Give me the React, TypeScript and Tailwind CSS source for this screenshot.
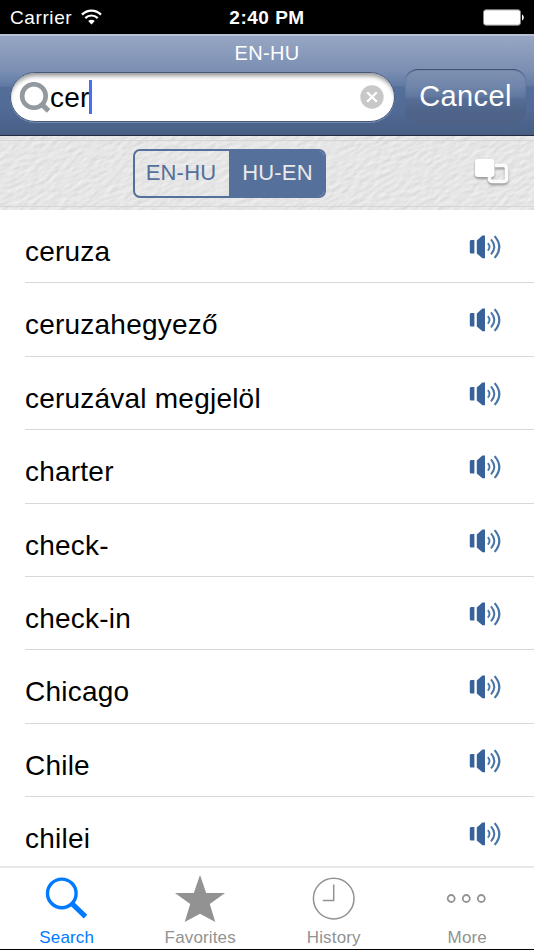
import React, { useState } from 'react';

const words = [
    'ceruza',
    'ceruzahegyező',
    'ceruzával megjelöl',
    'charter',
    'check-',
    'check-in',
    'Chicago',
    'Chile',
    'chilei',
];

function StatusBar(): JSX.Element {
    return (
        <div className="grid h-[34px] shrink-0 grid-cols-3 items-center bg-black px-[10px] pt-[3px] text-[19px] text-white">
            <div className="flex items-center gap-[9px]">
                <span className="tracking-[0.6px]">Carrier</span>
                <svg className="-mt-[3px] h-[16px] w-[21px]" viewBox="0 0 21 16" fill="none" stroke="white">
                    <path d="M1 5.6C6.5.2 14.5.2 20 5.6" strokeWidth="2.3" />
                    <path d="M4.3 9.1c3.6-3.5 8.8-3.5 12.4 0" strokeWidth="2.2" />
                    <path d="M10.5 15.4 7.2 12.1c1.9-1.8 4.7-1.8 6.6 0Z" fill="white" stroke="none" />
                </svg>
            </div>
            <span className="text-center text-[19px] font-bold tracking-[0.5px] whitespace-nowrap">2:40 PM</span>
            <svg className="-mt-[3px] -mr-[1px] h-[17px] w-[42px] justify-self-end" viewBox="0 0 42 17">
                <rect x="0.5" y="0.8" width="37" height="15.4" rx="2.5" fill="white" stroke="#888" />
                <path d="M39 5.5c2.4 1 2.4 5 0 6Z" fill="white" />
            </svg>
        </div>
    );
}

function SearchHeader(): JSX.Element {
    return (
        <header className="flex h-[102px] shrink-0 flex-col border-t-2 border-b border-t-[#b8c1d4] border-b-[#232c40] bg-[linear-gradient(#97a6c3_0%,#7b8fb3_35%,#627aa4_50%,#546e9a_52%,#516a96_75%,#485e84_100%)]">
            <h1 className="h-[33px] pt-[4px] text-center text-[20px] leading-[26px] tracking-[0.3px] text-white">EN-HU</h1>
            <div className="flex pl-[10px]">
                <div className="mt-[3px] flex h-[50px] w-[385px] items-center rounded-full border border-[#45597e] bg-white pr-[10px] pl-[8px] shadow-[inset_0_5px_4px_-2px_#999,0_1px_0_#7389ae]">
                    <svg className="h-[31px] w-[31px] shrink-0" viewBox="0 0 31 31" fill="none" stroke="#92999f">
                        <circle cx="14.9" cy="14" r="11.8" strokeWidth="4.6" />
                        <path d="m22.3 21.8 7.3 7.2" strokeWidth="5.2" />
                    </svg>
                    <span className="pt-[2px] text-[28px] leading-[34px] tracking-[0.2px] text-black">cer</span>
                    <span className="-ml-px h-[34px] w-[3px] bg-[#476ef0]" />
                    <button className="ml-auto" type="button" aria-label="Clear">
                        <svg className="h-[24px] w-[24px]" viewBox="0 0 24 24">
                            <circle cx="12" cy="12" r="11.7" fill="#c8c8c8" />
                            <path d="m7.2 7.2 9.6 9.6m0-9.6-9.6 9.6" stroke="white" strokeWidth="2.3" />
                        </svg>
                    </button>
                </div>
                <button
                    className="ml-[10px] h-[56px] w-[121px] rounded-[13px] bg-[linear-gradient(#7f92b4_0%,#7086aa_30%,#6178a0_49%,#586e95_53%,#4f6489_75%,#4e6287_100%)] pb-px text-[29px] tracking-[0.4px] text-white shadow-[inset_0_2px_1px_-1px_#3e4f6e,inset_0_0_2px_#536994]"
                    type="button">
                    Cancel
                </button>
            </div>
        </header>
    );
}

function LanguageBar(): JSX.Element {
    const [direction, setDirection] = useState('HU-EN');

    return (
        <div className="relative isolate flex h-[74px] shrink-0 items-center bg-[#e4e4e4] pr-[24px] pl-[133px]">
            {/* leather grain */}
            <svg className="absolute inset-0 -z-10 h-full w-full">
                <filter id="grain" x="0" y="0" width="100%" height="100%" colorInterpolationFilters="sRGB">
                    <feTurbulence type="fractalNoise" baseFrequency="0.11 0.24" numOctaves="2" seed="8" />
                    <feDiffuseLighting lightingColor="#fff" surfaceScale="0.24" diffuseConstant="1.04">
                        <feDistantLight azimuth="250" elevation="60" />
                    </feDiffuseLighting>
                </filter>
                <g transform="rotate(-24 267 37)">
                    <rect x="-40" y="-160" width="620" height="400" filter="url(#grain)" />
                </g>
                <path d="M0 4.5h534M0 70.5h534" stroke="#d6d6d6" />
            </svg>
            <div className="flex h-[49px] w-[193px] overflow-hidden rounded-[7px] border-2 border-[#54709b] text-[22px] tracking-[0.2px]">
                <button
                    className={`${direction === 'EN-HU' ? 'bg-[#54709b] text-[#e9e9e9]' : 'text-[#54709b]'} w-[94px] pr-[2px] pb-px`}
                    onClick={() => setDirection('EN-HU')}
                    type="button">
                    EN-HU
                </button>
                <button
                    className={`${direction === 'HU-EN' ? 'bg-[#54709b] text-[#e9e9e9]' : 'text-[#54709b]'} flex-1 pb-px pl-[2px]`}
                    onClick={() => setDirection('HU-EN')}
                    type="button">
                    HU-EN
                </button>
            </div>
            <svg className="ml-auto h-[32px] w-[36px] drop-shadow-[0_2px_1px_#999]" viewBox="0 0 36 32">
                <path
                    d="M21 8.5h8.5q3 0 3 3v10q0 3-3 3h-11q-3 0-3-3v-4"
                    fill="none"
                    stroke="#fbfbfb"
                    strokeWidth="3.6"
                />
                <rect x="1" y="2" width="19.5" height="18" rx="3" fill="white" />
            </svg>
        </div>
    );
}

function SpeakerIcon(): JSX.Element {
    return (
        <svg className="h-[24px] w-[32px]" viewBox="0 0 32 24" fill="none" stroke="#4875a8">
            <path d="M2 5.1h3.4v13.4H2Q.8 18.5.8 17V6.6Q.8 5.1 2 5.1Z" fill="#38639a" stroke="none" />
            <path d="M7.8 5.4 13.4.5H16v22.8h-2.6l-5.6-4.9Z" fill="#38639a" stroke="none" />
            <path d="M18.8 8.1q3.4 3.8 0 7.6" strokeWidth="1.8" />
            <path d="M22 4.4q6.6 7.5 0 15" strokeWidth="2" />
            <path d="M25.6 1.1q9.4 10.8 0 21.8" strokeWidth="2.2" />
        </svg>
    );
}

function TabBar(): JSX.Element {
    return (
        <nav className="grid h-[83px] shrink-0 grid-cols-4 border-t-2 border-[#e8e8e8] bg-white text-[17px] leading-[20px] tracking-[0.15px] text-[#929292]">
            <a className="flex flex-col items-center text-[#007aff]">
                <svg className="h-[60px] w-[50px]" viewBox="0 0 50 60" fill="none" stroke="currentColor">
                    <circle cx="19.8" cy="25.4" r="14.3" strokeWidth="3.4" />
                    <path d="m30 35.6 13.5 13" strokeWidth="5" />
                </svg>
                <span>Search</span>
            </a>
            <a className="flex flex-col items-center">
                <svg className="h-[60px] w-[50px]" viewBox="0 0 50 60" fill="currentColor">
                    <path d="m25 7 6.2 18H50L34.8 36.1 40.3 54 25 45.8 9.7 54l5.5-17.9L0 25h18.8Z" />
                </svg>
                <span>Favorites</span>
            </a>
            <a className="flex flex-col items-center">
                <svg className="h-[60px] w-[50px]" viewBox="0 0 50 60" fill="none" stroke="currentColor" strokeWidth="1.5">
                    <circle cx="24.7" cy="30.6" r="20.3" />
                    <path d="M24.7 16.5v16H13.8" />
                </svg>
                <span>History</span>
            </a>
            <a className="flex flex-col items-center">
                <svg className="h-[60px] w-[50px]" viewBox="0 0 50 60" fill="none" stroke="currentColor" strokeWidth="1.8">
                    <circle cx="9.2" cy="30.5" r="3.5" />
                    <circle cx="24.3" cy="30.5" r="3.5" />
                    <circle cx="39.3" cy="30.5" r="3.5" />
                </svg>
                <span>More</span>
            </a>
        </nav>
    );
}

export default function App(): JSX.Element {
    return (
        <div className="flex h-[950px] w-[534px] flex-col overflow-hidden border-b border-black bg-white font-['Liberation_Sans',Arial,sans-serif]">
            <StatusBar />
            <SearchHeader />
            <LanguageBar />
            <ul className="min-h-0 flex-1 overflow-hidden pl-[25px]">
                {words.map((word) => (
                    <li key={word} className="flex h-[73.4px] justify-between border-b border-[#d8d8d8] pr-[33px]">
                        <span className="pt-[26px] text-[28px] leading-[32px] tracking-[0.22px] text-black">{word}</span>
                        <button className="h-[24px] pt-[25px]" type="button" aria-label={`Play ${word}`}>
                            <SpeakerIcon />
                        </button>
                    </li>
                ))}
            </ul>
            <TabBar />
        </div>
    );
}
